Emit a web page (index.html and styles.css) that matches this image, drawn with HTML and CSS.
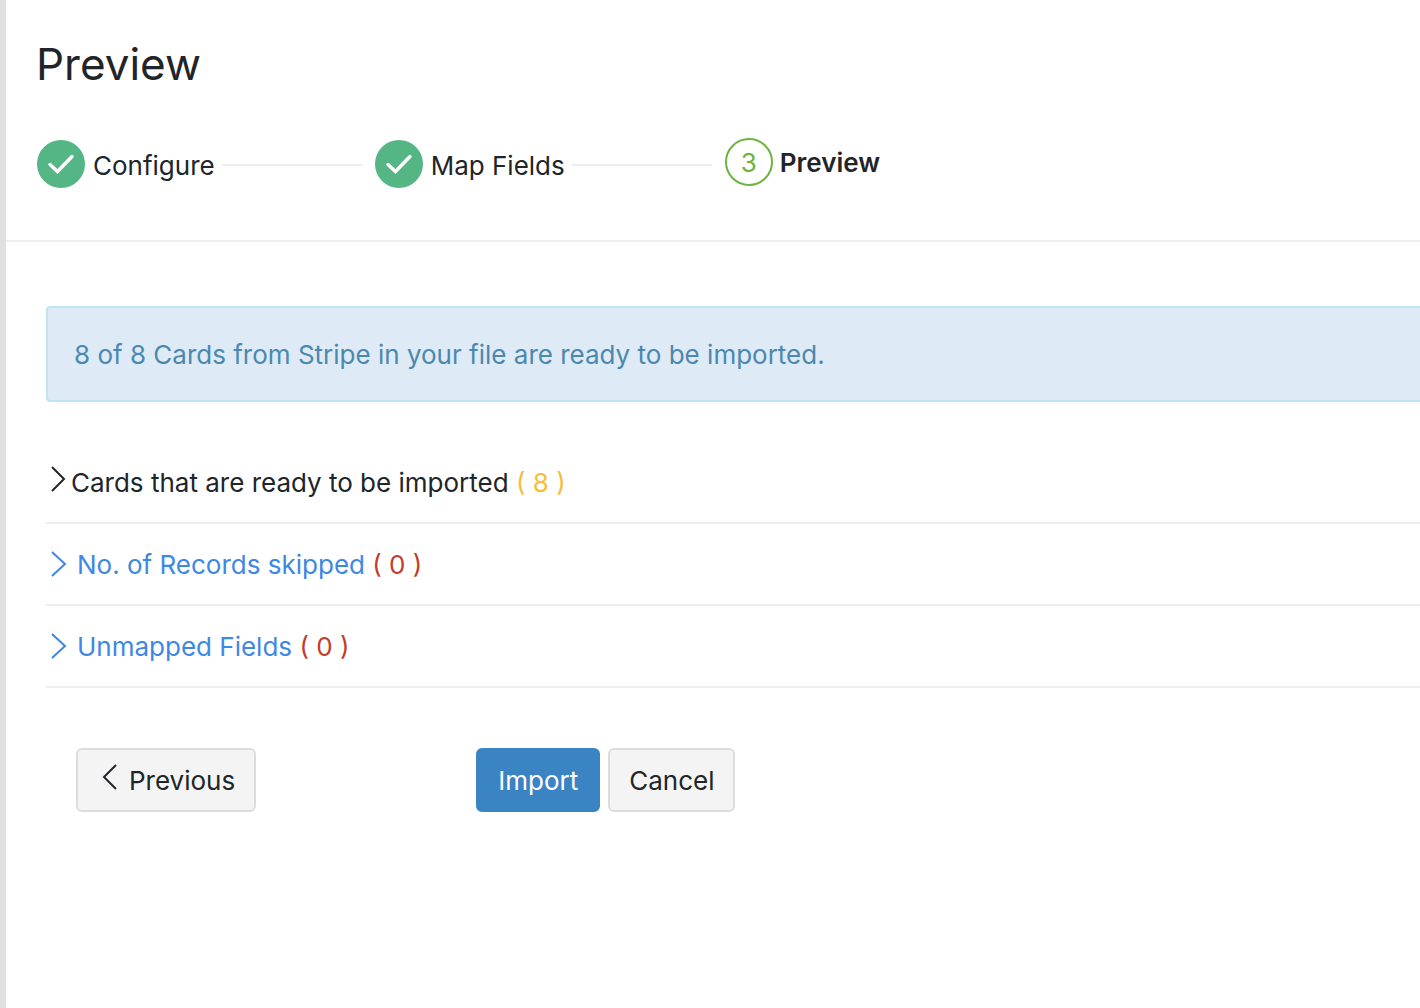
FILE: index.html
```html
<!DOCTYPE html>
<html lang="en">
<head>
<meta charset="utf-8">
<title>Preview</title>
<link rel="stylesheet" href="styles.css">
</head>
<body>
<main class="page">
  <header class="page-header">
    <h1 class="title">Preview</h1>
    <ol class="steps">
      <li class="step">
        <svg class="step-mark" viewBox="0 0 48 48" aria-hidden="true"><circle cx="24" cy="24" r="24" fill="#55b685"/><path d="M13 24.500l7.500 7L35 16.500" fill="none" stroke="#fff" stroke-width="3.400" stroke-linecap="round"/></svg>
        <span class="step-label">Configure</span>
        <span class="step-line"></span>
      </li>
      <li class="step">
        <svg class="step-mark" viewBox="0 0 48 48" aria-hidden="true"><circle cx="24" cy="24" r="24" fill="#55b685"/><path d="M13 24.500l7.500 7L35 16.500" fill="none" stroke="#fff" stroke-width="3.400" stroke-linecap="round"/></svg>
        <span class="step-label">Map Fields</span>
        <span class="step-line"></span>
      </li>
      <li class="step step-current" aria-current="step">
        <span class="step-number">3</span>
        <span class="step-label">Preview</span>
      </li>
    </ol>
  </header>
  <section class="content">
    <p class="notice">8 of 8 Cards from Stripe in your file are ready to be imported.</p>
    <ul class="results">
      <li class="result result-ready">
        <svg class="chevron" viewBox="0 0 16 26" aria-hidden="true"><path d="M1 1l12 12L1 25"/></svg>
        <span>Cards that are ready to be imported <span class="count">( 8 )</span></span>
      </li>
      <li class="result">
        <svg class="chevron" viewBox="0 0 16 26" aria-hidden="true"><path d="M1 1l13 12L1 25"/></svg>
        <span><a href="#skipped">No. of Records skipped</a> <span class="count">( 0 )</span></span>
      </li>
      <li class="result">
        <svg class="chevron" viewBox="0 0 16 26" aria-hidden="true"><path d="M1 1l13 12L1 25"/></svg>
        <span><a href="#unmapped">Unmapped Fields</a> <span class="count">( 0 )</span></span>
      </li>
    </ul>
    <div class="actions">
      <button class="button button-previous" type="button"><svg class="back" viewBox="0 0 16 26" aria-hidden="true"><path d="M14 1L2 13l12 12"/></svg>Previous</button>
      <button class="button button-primary" type="button">Import</button>
      <button class="button" type="button">Cancel</button>
    </div>
  </section>
</main>
</body>
</html>
```
FILE: styles.css
```css
* { box-sizing: border-box; }
body {
  margin: 0;
  color: #212529;
  font: 26px/32px Inter, "Liberation Sans", sans-serif;
}
.page {
  min-height: 100vh;
  border-left: 6px solid #e0e0e0;
}
.page-header {
  padding: 36px 30px 50px;
  border-bottom: 2px solid #eee;
}
.title {
  margin: 0 0 46px;
  font-size: 44px;
  font-weight: 400;
  line-height: 56px;
}
.steps {
  display: flex;
  align-items: flex-end;
  margin: 0;
  padding: 0 0 0 1px;
  list-style: none;
}
.step { display: flex; align-items: center; height: 52px; }
.step-mark { width: 48px; height: 48px; margin-right: 8px; }
.step-label { padding-top: 4px; white-space: nowrap; }
.step-line { width: 140px; height: 2px; margin: 2px 13px 0 7px; background: #eee; }
.step-current { padding: 0 0 4px; font-weight: 600; }
.step-current .step-label { padding-top: 2px; }
.step-number {
  width: 48px;
  height: 48px;
  margin-right: 7px;
  border: 2px solid #6db33f;
  border-radius: 50%;
  color: #6db33f;
  font-weight: 400;
  line-height: 45px;
  text-align: center;
}
.content { padding: 64px 0 0 40px; }
.notice {
  margin: 0;
  padding: 31px 26px 29px;
  border: 2px solid #c1e5ee;
  border-right: 0;
  border-radius: 4px 0 0 4px;
  background: #deebf6;
  color: #4b88ae;
}
.results { margin: 40px 0 60px; padding: 0; list-style: none; }
.result {
  display: flex;
  align-items: center;
  height: 82px;
  padding: 2px 0 0 5px;
  border-bottom: 2px solid #eee;
  color: #3f87e5;
}
.result a { color: inherit; text-decoration: none; }
.chevron, .back { width: 16px; height: 26px; fill: none; stroke: currentColor; stroke-width: 2; }
.chevron { margin: 0 10px 2px 0; }
.count { color: #c43c2a; }
.result-ready { color: #212529; }
.result-ready .chevron { margin: 0 4px 8px 0; }
.result-ready .count { color: #f6bd3c; }
.actions { display: flex; gap: 8px; padding-left: 30px; }
.button {
  height: 64px;
  padding: 2px 19px 0;
  border: 2px solid #ddd;
  border-radius: 6px;
  background: #f4f4f4;
  color: #212529;
  font: inherit;
}
.button-previous { display: flex; align-items: center; margin-right: 212px; padding-left: 24px; }
.back { margin: 0 11px 8px 0; }
.button-primary { padding: 2px 20px 0; border-color: #3b84c4; background: #3b84c4; color: #fff; }
```
